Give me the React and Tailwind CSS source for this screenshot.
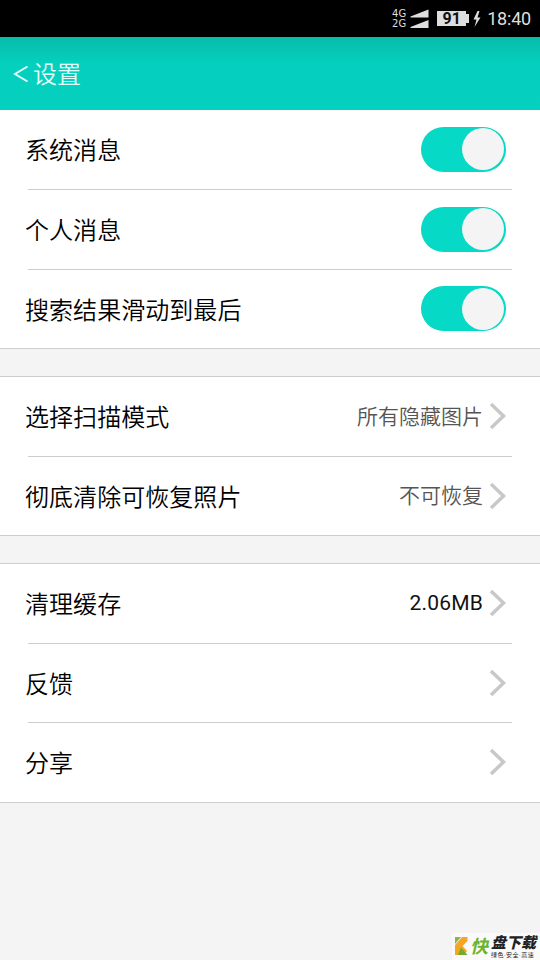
import React, { useState } from "react";
import clsx from "clsx";

function StatusBar() {
    return (
        <div className="flex h-[37px] items-center justify-end bg-black pr-[8px] text-[#dedede]">
            <div className="mr-[4px] mt-px flex flex-col font-['DejaVu_Sans'] text-[10px] leading-[10px]">
                <span className="h-[10px] overflow-hidden">4G</span>
                <span className="h-[10px] overflow-hidden">2G</span>
            </div>
            <svg className="mr-[8px]" width="19" height="20" viewBox="0 0 19 20" fill="#dedede">
                <path d="M0.5 7.5 L18.5 0.5 V8.5 H0.5 Z" />
                <path d="M0.5 18 L18.5 11 V19 H0.5 Z" />
            </svg>
            <div className="flex items-center">
                <span className="flex h-[15px] w-[29px] items-center justify-center bg-[#dedede] font-['Roboto'] text-[16px] font-bold leading-none text-[#111]">91</span>
                <span className="h-[9px] w-[3px] bg-[#dedede]" />
            </div>
            <svg className="ml-[4px] mr-[6px]" width="8" height="16" viewBox="0 0 8 16" fill="#dedede">
                <path d="M4.5 0 L0.5 8.5 H3.5 L1.5 16 L7.5 6.5 H4.5 L6.5 0 Z" />
            </svg>
            <span className="mr-px font-['Roboto'] text-[18px] leading-none tracking-[-0.2px]">18:40</span>
        </div>
    );
}

function Toggle({ defaultOn = true }) {
    const [on, setOn] = useState(defaultOn);

    return (
        <button
            onClick={() => setOn(!on)}
            className={clsx(
                "mb-px mr-[1.5px] flex h-[45px] w-[85px] items-center rounded-full p-[2px]",
                on ? "justify-end bg-[#06d9c5]" : "justify-start bg-[#cccccc]"
            )}
        >
            <span className="h-[42px] w-[42px] rounded-full bg-[#f4f4f4]" />
        </button>
    );
}

function Chevron() {
    return (
        <svg className="mb-px ml-[6px]" width="18" height="28" viewBox="0 0 18 28" fill="none" stroke="#c8c8c8" strokeWidth="3.5">
            <path d="M2 2 L14.5 14 L2 26" />
        </svg>
    );
}

function Row({ label, last, short, children }) {
    return (
        <div className={clsx("flex flex-col", short ? "h-[79px]" : "h-[80px]")}>
            <div className="flex flex-1 items-center justify-between pl-[25px] pr-[33px]">
                <span className={clsx("text-[24px] font-[350] leading-[36px] tracking-[0.05px] text-black", short ? "pt-[4px]" : "pt-[2px]")}>{label}</span>
                <div className="flex items-center">{children}</div>
            </div>
            <div className={clsx("h-px bg-[#cecece]", !last && "ml-[28px] mr-[28px]")} />
        </div>
    );
}

function Watermark() {
    return (
        <div className="absolute bottom-0 right-0 flex h-[27px] w-[88px] items-center bg-[#fafafa]">
            <svg className="mb-[2px] ml-[3px]" width="13" height="18" viewBox="0 0 13 18">
                <path d="M0 0 H6 L0 7 Z" fill="#86b93c" />
                <path d="M7 0 H12.5 V4 L7.5 9 L12 14 L9 18 H0 V8 Z" fill="#f5a623" />
                <path d="M6 10.5 L12.5 18 H3 Z" fill="#6fae2c" />
            </svg>
            <span className="ml-[2px] text-[18px] font-bold italic leading-none text-[#6cb42c]">快</span>
            <div className="ml-[3px] flex flex-col text-[#222]">
                <span className="whitespace-nowrap text-[15px] font-black italic leading-[15px]">盘下载</span>
                <span className="whitespace-nowrap text-[6px] leading-[7px] tracking-[0.5px]">绿色·安全·高速</span>
            </div>
        </div>
    );
}

export default function App() {
    return (
        <div className="relative h-[960px] w-[540px] overflow-hidden bg-[#f4f4f4] font-['Roboto','Noto_Sans_CJK_SC',sans-serif]">
            <StatusBar />

            {/* Title bar */}
            <div className="flex h-[73px] items-center bg-linear-to-b from-[#08bba9] via-[#05cfbd] via-35% to-[#05d1c0] pl-[13px]">
                <svg width="16" height="18" viewBox="0 0 16 18" fill="none" stroke="#e2fffb" strokeWidth="2">
                    <path d="M14.5 1.5 L2 9 L14.5 16.5" />
                </svg>
                <span className="ml-[4px] pt-[3px] text-[24px] font-[350] leading-[36px] text-[#e2fffb]">设置</span>
            </div>

            <div className="bg-white">
                <Row label="系统消息"><Toggle /></Row>
                <Row label="个人消息"><Toggle /></Row>
                <Row label="搜索结果滑动到最后" short last><Toggle /></Row>
            </div>

            <div className="mt-[27px] border-t border-[#cecece] bg-white">
                <Row label="选择扫描模式">
                    <span className="pt-[2px] text-[21px] font-[350] text-[#555]">所有隐藏图片</span>
                    <Chevron />
                </Row>
                <Row label="彻底清除可恢复照片" short last>
                    <span className="pt-[2px] text-[21px] font-[350] text-[#555]">不可恢复</span>
                    <Chevron />
                </Row>
            </div>

            <div className="mt-[27px] border-t border-[#cecece] bg-white">
                <Row label="清理缓存">
                    <span className="text-[21px] tracking-[0.2px] text-[#111]">2.06MB</span>
                    <Chevron />
                </Row>
                <Row label="反馈" short><Chevron /></Row>
                <Row label="分享" last><Chevron /></Row>
            </div>

            <Watermark />
        </div>
    );
}
